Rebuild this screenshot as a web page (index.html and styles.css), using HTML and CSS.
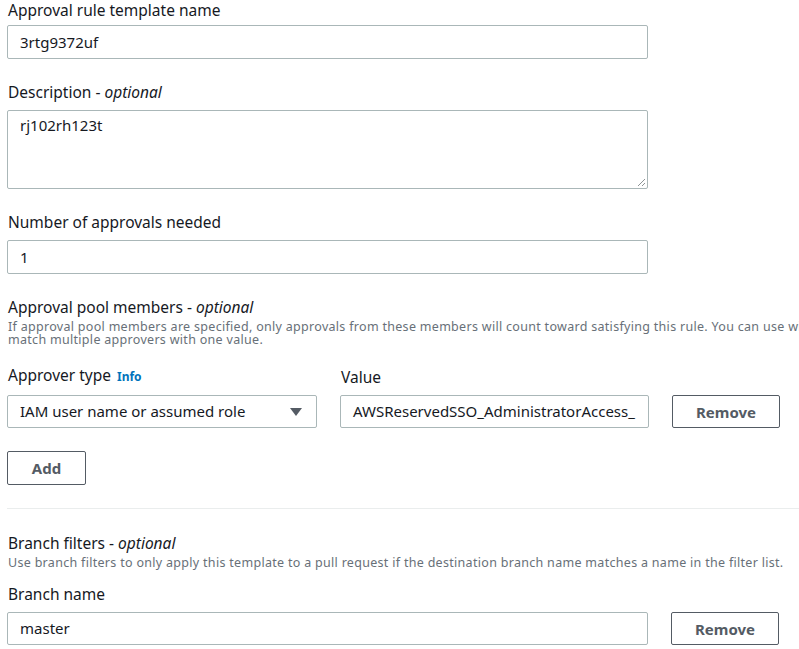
FILE: index.html
```html
<!DOCTYPE html>
<html lang="en">
<head>
    <meta charset="UTF-8">
    <title>Approval rule template</title>
    <link rel="stylesheet" href="styles.css">
</head>
<body>
    <div class="form">
        <div class="field first">
            <label class="label">Approval rule template name</label>
            <div class="input">3rtg9372uf</div>
        </div>

        <div class="field">
            <label class="label">Description - <i>optional</i></label>
            <div class="input textarea">
                rj102rh123t
                <svg class="grip" width="10" height="10" viewBox="0 0 10 10">
                    <path d="M9 2 L2 9 M9 6 L6 9" stroke="#8d9496" stroke-width="1"/>
                </svg>
            </div>
        </div>

        <div class="field">
            <label class="label">Number of approvals needed</label>
            <div class="input">1</div>
        </div>

        <div class="field pool">
            <label class="label head">Approval pool members - <i>optional</i></label>
            <p class="hint">If approval pool members are specified, only approvals from these members will count toward satisfying this rule. You can use wildcards to match multiple approvers with one value.</p>

            <div class="row">
                <div class="col type-col">
                    <label class="label">Approver type <a class="info">Info</a></label>
                    <div class="input select">
                        IAM user name or assumed role
                        <span class="caret"></span>
                    </div>
                </div>
                <div class="col value-col">
                    <label class="label">Value</label>
                    <div class="input">AWSReservedSSO_AdministratorAccess_</div>
                </div>
                <button class="btn">Remove</button>
            </div>

            <button class="btn add">Add</button>
        </div>

        <hr class="divider">

        <div class="field branches">
            <label class="label head">Branch filters - <i>optional</i></label>
            <p class="hint">Use branch filters to only apply this template to a pull request if the destination branch name matches a name in the filter list.</p>
            <label class="label">Branch name</label>
            <div class="row">
                <div class="input branch">master</div>
                <button class="btn">Remove</button>
            </div>
        </div>
    </div>
</body>
</html>
```

FILE: styles.css
```css
* {
    margin: 0;
    padding: 0;
    box-sizing: border-box;
}

html, body {
    width: 100%;
    height: 100%;
    overflow: hidden;
    background: #fff;
    font-family: 'Noto Sans', 'Open Sans', sans-serif;
    color: #16191f;
}

.form {
    width: 900px;
    padding-left: 7px;
}

.field {
    margin-bottom: 23px;
}

.label {
    display: block;
    font-size: 15.5px;
    line-height: 20px;
    margin-bottom: 8px;
    padding-left: 1px;
}

.first .label {
    margin-bottom: 5px;
}

.label.head {
    margin-bottom: 3px;
}

.info {
    color: #0073bb;
    font-size: 12px;
    font-weight: bold;
    margin-left: 2px;
}

.input {
    width: 641px;
    height: 34px;
    border: 1px solid #aab7b8;
    border-radius: 2px;
    padding: 0 12px;
    font-size: 15px;
    line-height: 32px;
    white-space: nowrap;
    overflow: hidden;
}

.textarea {
    position: relative;
    height: 79px;
    line-height: 28px;
}

.grip {
    position: absolute;
    right: 1px;
    bottom: 1px;
}

.hint {
    font-size: 12.5px;
    letter-spacing: 0.3px;
    color: #687078;
    line-height: 13px;
    padding-left: 1px;
    width: 890px;
}

.pool .hint {
    margin-bottom: 19px;
}

.branches .hint {
    margin-bottom: 15px;
}

.row {
    display: flex;
    align-items: flex-end;
}

.col {
    display: flex;
    flex-direction: column;
}

.type-col .input {
    width: 310px;
}

.value-col {
    margin-left: 23px;
}

.value-col .input {
    width: 309px;
}

.row .input {
    height: 33px;
    line-height: 31px;
}

.select {
    position: relative;
    padding-right: 40px;
}

.caret {
    position: absolute;
    right: 14px;
    top: 12px;
    width: 0;
    height: 0;
    border-left: 6px solid transparent;
    border-right: 6px solid transparent;
    border-top: 8px solid #545b64;
}

.btn {
    height: 33px;
    width: 108px;
    margin-left: 23px;
    background: #fff;
    border: 1px solid #545b64;
    border-radius: 2px;
    font-family: inherit;
    font-size: 15px;
    font-weight: bold;
    color: #545b64;
}

.add {
    display: block;
    width: 79px;
    height: 34px;
    margin: 23px 0 0 0;
}

.divider {
    border: none;
    border-top: 1px solid #eaeded;
    margin: 0 0 24px 0;
}
```
